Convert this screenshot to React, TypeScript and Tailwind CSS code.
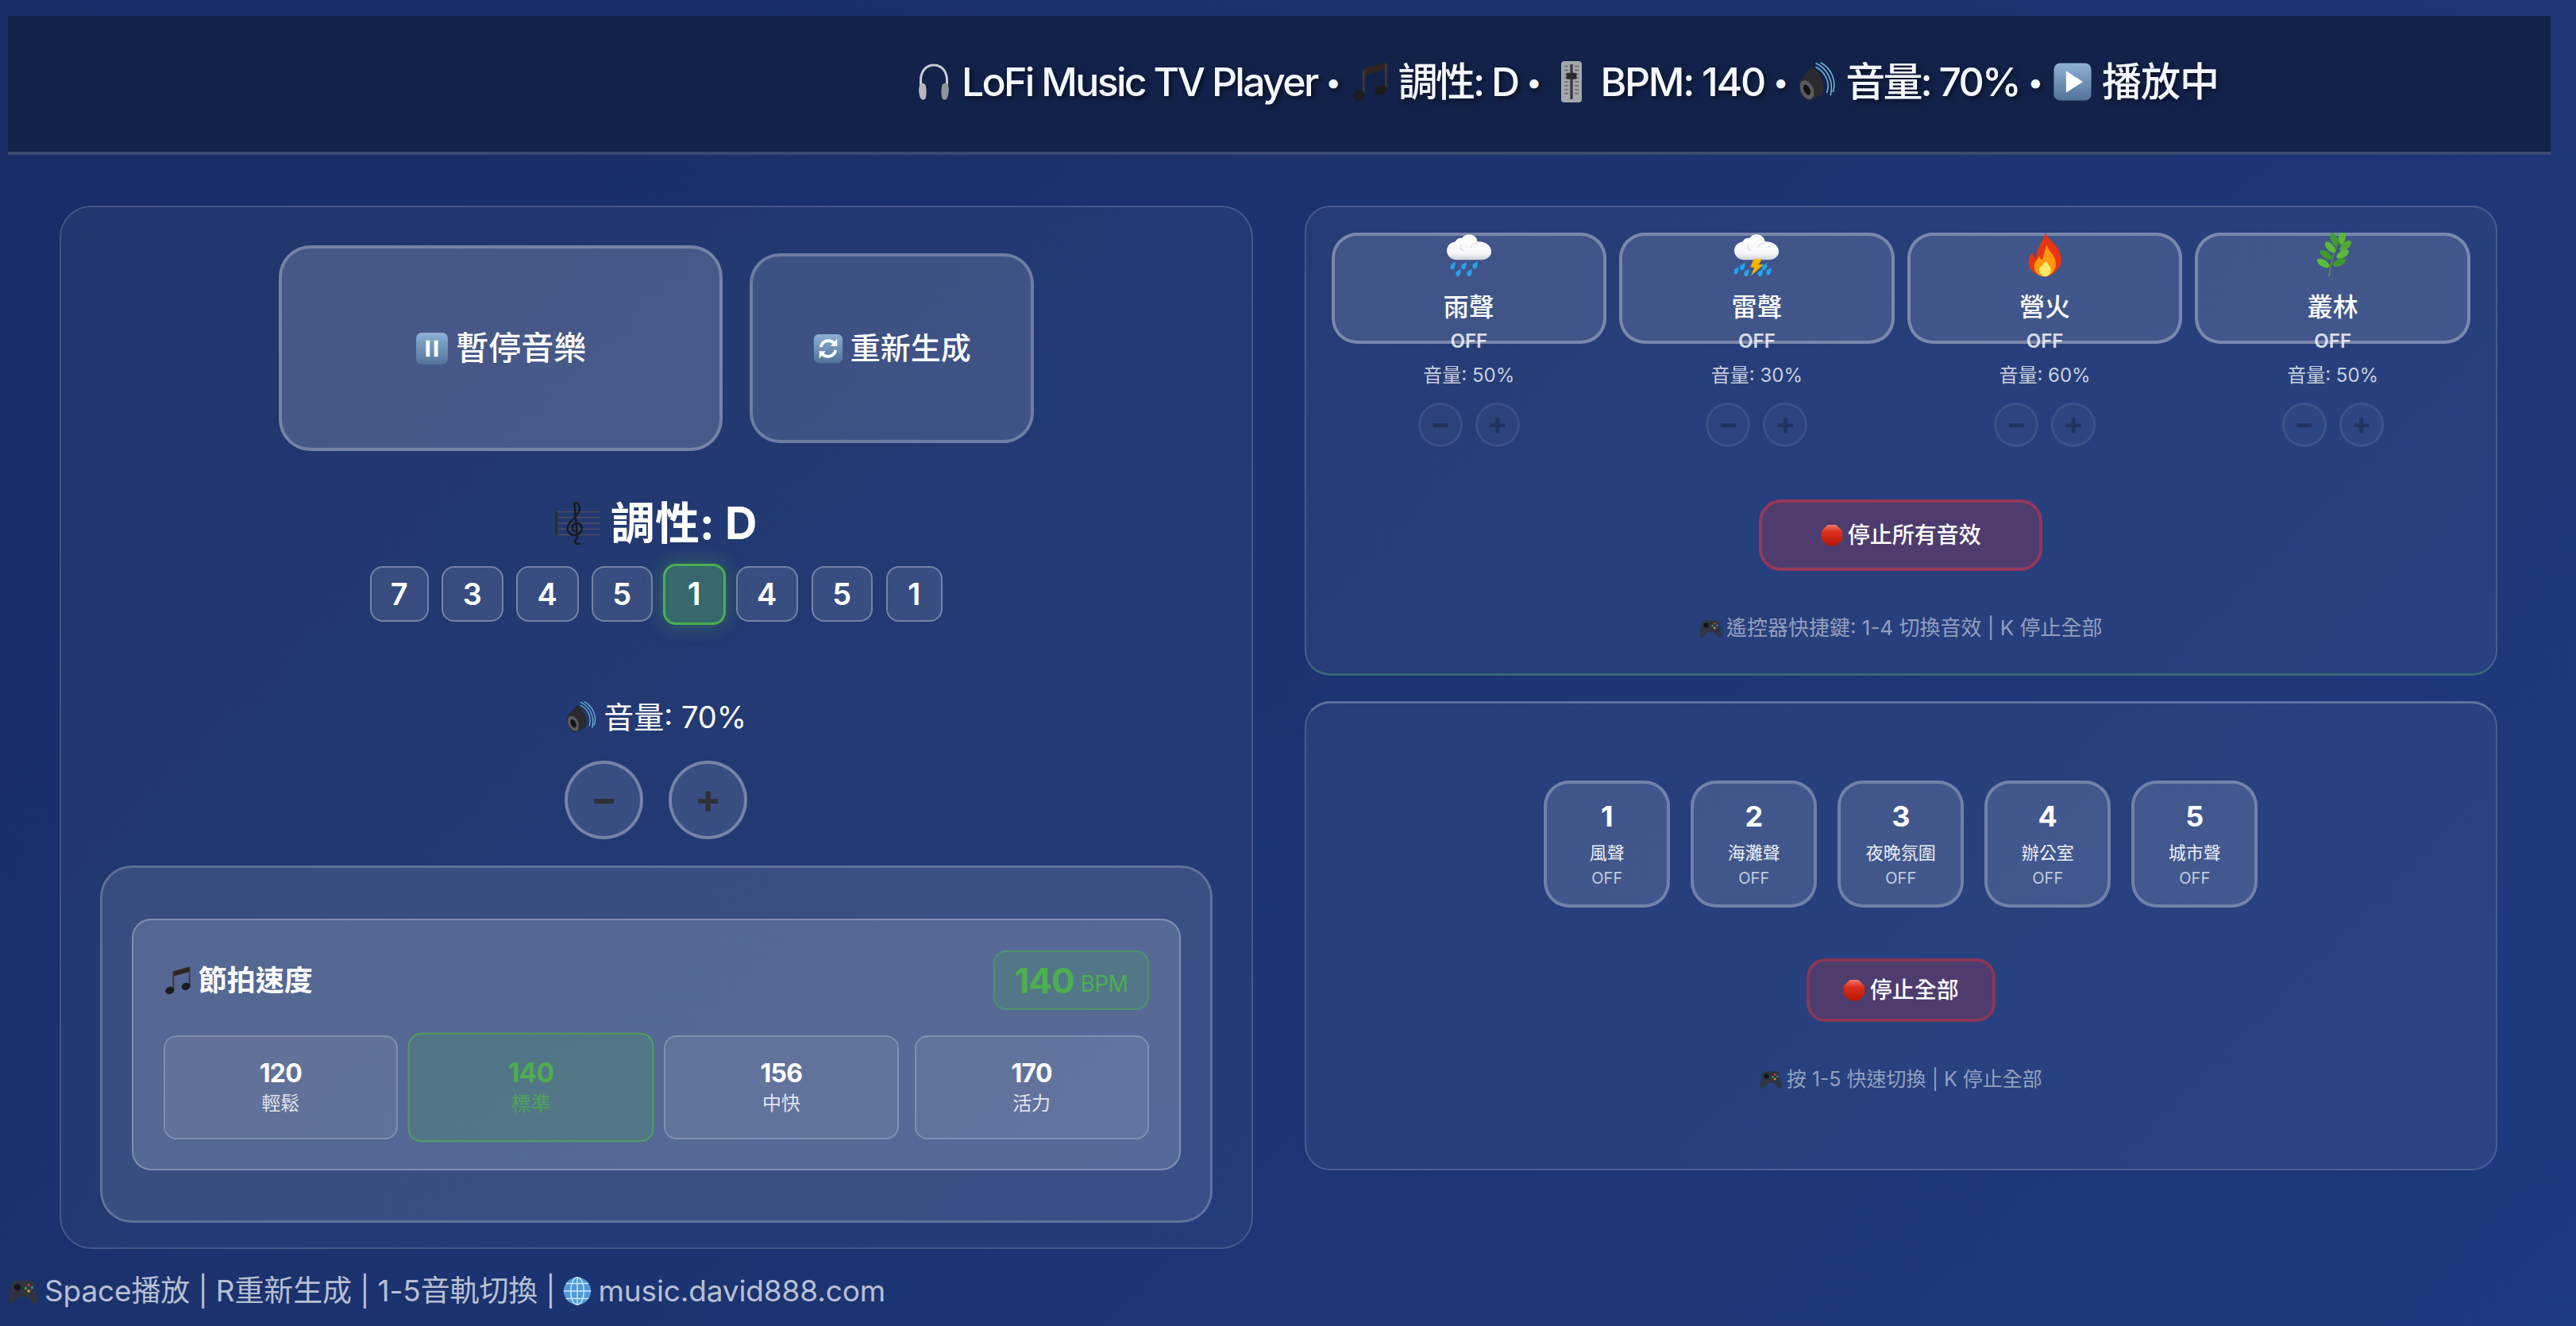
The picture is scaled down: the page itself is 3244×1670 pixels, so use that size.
import React from "react";

type S = { s: number; className?: string };
const Svg = ({ s, className, children }: S & { children: React.ReactNode }) => (
  <svg width={s} height={s} viewBox="0 0 64 64" className={`inline-block shrink-0 ${className ?? ""}`}>{children}</svg>
);

const Headphones = ({ s }: S) => (
  <Svg s={s}>
    <path d="M10 42V30C10 14 19 4 32 4s22 10 22 26v12" fill="none" stroke="#c9ccd2" strokeWidth="4" />
    <path d="M9 36c-3 4-3 16 1 24 2 3 6 3 8 0 2-7 2-15 0-23-2-3-7-4-9-1z" fill="#b4b7bd" />
    <path d="M55 36c3 4 3 16-1 24-2 3-6 3-8 0-2-7-2-15 0-23 2-3 7-4 9-1z" fill="#8f9298" />
  </Svg>
);
const Notes = ({ s }: S) => (
  <Svg s={s}>
    <path d="M22 11L58 1v11L22 22z" fill="#2e2523" />
    <path d="M22 13v40M58 3v40" stroke="#3f3836" strokeWidth="3.5" />
    <ellipse cx="14" cy="54" rx="10" ry="8" fill="#1c1c1f" transform="rotate(-20 14 54)" />
    <ellipse cx="50" cy="45" rx="10" ry="8" fill="#1c1c1f" transform="rotate(-20 50 45)" />
  </Svg>
);
const Slider = ({ s }: S) => (
  <Svg s={s}>
    <rect x="16" y="0" width="32" height="64" rx="5" fill="#a3a7ad" />
    <rect x="30" y="5" width="4" height="54" fill="#33363b" />
    <path d="M21 8h6M21 14h6M21 20h6M21 26h6M21 32h6M21 38h6M21 44h6M21 50h6M37 8h6M37 14h6M37 20h6M37 26h6M37 32h6M37 38h6M37 44h6M37 50h6" stroke="#6c7076" strokeWidth="2" />
    <rect x="24" y="18" width="16" height="10" rx="2" fill="#2a2c30" />
  </Svg>
);
const Speaker = ({ s }: S) => (
  <Svg s={s}>
    <path d="M30 2c18 8 30 28 24 52M38 1c18 10 26 30 20 48M30 8c16 8 24 26 18 42" fill="none" stroke="#6fb7d8" strokeWidth="2" />
    <path d="M4 30L24 8c13 7 22 28 17 44L18 63C7 58 2 43 4 30z" fill="#2b2b2f" />
    <ellipse cx="16" cy="45" rx="10" ry="16" fill="#5b5c63" transform="rotate(-25 16 45)" />
    <ellipse cx="16" cy="45" rx="5" ry="9" fill="#141417" transform="rotate(-25 16 45)" />
  </Svg>
);
const KeyTile = ({ s, children }: S & { children: React.ReactNode }) => (
  <Svg s={s}>
    <defs>
      <linearGradient id="tile" x1="0" y1="0" x2="0" y2="1">
        <stop offset="0" stopColor="#8db2d6" />
        <stop offset="1" stopColor="#517399" />
      </linearGradient>
    </defs>
    <rect x="3" y="3" width="58" height="58" rx="10" fill="url(#tile)" />
    {children}
  </Svg>
);
const Play = ({ s }: S) => <KeyTile s={s}><path d="M22 15l26 17-26 17z" fill="#fff" /></KeyTile>;
const Pause = ({ s }: S) => <KeyTile s={s}><path d="M21 17h7v30h-7zM36 17h7v30h-7z" fill="#fff" /></KeyTile>;
const Refresh = ({ s }: S) => (
  <KeyTile s={s}>
    <path d="M17 29a16 16 0 0 1 28-7M47 35a16 16 0 0 1-28 7" fill="none" stroke="#fff" strokeWidth="6" />
    <path d="M50 12v15H37zM14 52V37h13z" fill="#fff" />
  </KeyTile>
);
const Score = ({ s }: S) => (
  <Svg s={s}>
    <path d="M2 16h60M2 24h60M2 32h60M2 40h60M2 48h60" stroke="#4a4d58" strokeWidth="1.5" />
    <path d="M2 16v32" stroke="#2a2a2e" strokeWidth="3" />
    <path d="M35 60c-6 3-10-3-5-6M31 54L27 4c6-3 9 8 5 14L19 33c-5 8 1 18 12 15 10-4 7-18-2-16-7 2-6 10-1 11" fill="none" stroke="#1a1a1e" strokeWidth="2.6" />
  </Svg>
);
const Cloud = () => (
  <g>
    <defs>
      <linearGradient id="cloudg" x1="0" y1="0" x2="0" y2="1">
        <stop offset="0" stopColor="#ffffff" />
        <stop offset="0.75" stopColor="#f6f7f9" />
        <stop offset="1" stopColor="#cfd3da" />
      </linearGradient>
    </defs>
    <path d="M14 39C6 39 0 33 0 26c0-7 5-12 12-13 2-4 6-6 10-5 3-6 14-8 20-1 1 2 2 4 2 6 10-1 20 5 20 14 0 7-6 12-14 12z" fill="url(#cloudg)" />
    <path d="M24 26c-4-1-6-6-3-9M44 15c-5 0-9 3-10 7" fill="none" stroke="#d7dbe1" strokeWidth="1.5" />
  </g>
);
const Drop = ({ x, y }: { x: number; y: number }) => (
  <path d={`M${x + 5} ${y - 6}c1 5-1 11-4 11s-4-4-2-7z`} fill="#26a2ee" />
);
const Rain = ({ s }: S) => (
  <Svg s={s}>
    <Cloud />
    {[[7, 48], [23, 48], [39, 47], [15, 58], [31, 58]].map(([x, y]) => (
      <Drop key={`${x}-${y}`} x={x} y={y} />
    ))}
  </Svg>
);
const Storm = ({ s }: S) => (
  <Svg s={s}>
    <Cloud />
    {[[1, 55], [10, 49], [16, 58], [42, 49], [48, 56], [36, 58]].map(([x, y]) => (
      <Drop key={`${x}-${y}`} x={x} y={y} />
    ))}
    <path d="M28 38h12l-5 8h7L24 62l5-12h-6z" fill="#f7b500" />
  </Svg>
);
const Fire = ({ s }: S) => (
  <Svg s={s}>
    <g transform="translate(-6 0) scale(1.2 1)">
      <path d="M33 0c3 12 16 18 18 34 1 6 1 13-5 20-4 6-9 9-14 9-9 0-17-6-19-15-2-8 0-15 4-20 0 5 2 8 4 9 0-12 8-23 12-37z" fill="#e8350f" />
      <path d="M34 18c2 9 11 15 11 27 0 9-6 18-13 18-8 0-13-7-13-14 0-7 4-10 6-15 1 3 2 5 4 5 1-7 3-14 5-21z" fill="#ff9a0f" />
      <path d="M33 40c1 5 6 8 6 13 0 5-3 10-7 10s-7-5-7-9c0-6 6-8 8-14z" fill="#ffe96a" />
    </g>
  </Svg>
);
const Herb = ({ s }: S) => {
  const leaves: [number, number, number, string][] = [
    [45, 7, 10, "#5cb83a"], [34, 10, -25, "#3f9a2f"], [50, 19, 50, "#4faa34"], [28, 21, -45, "#5cb83a"],
    [46, 31, 60, "#5cb83a"], [22, 32, -55, "#3f9a2f"], [41, 43, 65, "#3f9a2f"], [18, 44, -60, "#5cb83a"],
  ];
  return (
    <Svg s={s}>
      <path d="M26 63C29 44 34 24 43 4" stroke="#5d8a3c" strokeWidth="2" fill="none" />
      {leaves.map(([x, y, r, c]) => (
        <ellipse key={`${x}-${y}`} cx={x} cy={y} rx="5" ry="10" fill={c} transform={`rotate(${r} ${x} ${y})`} />
      ))}
    </Svg>
  );
};
const Stop = ({ s }: S) => (
  <Svg s={s}>
    <defs>
      <linearGradient id="stopg" x1="0" y1="0" x2="0" y2="1">
        <stop offset="0" stopColor="#f0776a" />
        <stop offset="0.35" stopColor="#d9301c" />
        <stop offset="1" stopColor="#b81500" />
      </linearGradient>
    </defs>
    <path d="M20 2h24l18 18v24L44 62H20L2 44V20z" fill="url(#stopg)" />
  </Svg>
);
const Pad = ({ s }: S) => (
  <Svg s={s}>
    <path d="M16 10h32c6 0 9 5 10 12l5 28c1 8-7 12-12 6L41 44H23L13 56c-5 6-13 2-12-6l5-28c1-7 4-12 10-12z" fill="#2f3540" />
    <circle cx="20" cy="24" r="7" fill="#12151b" />
    <circle cx="44" cy="19" r="3" fill="#c93a3a" />
    <circle cx="51" cy="25" r="3" fill="#3a7ac9" />
    <circle cx="38" cy="26" r="3" fill="#4a9a4a" />
    <circle cx="44" cy="32" r="3" fill="#d0a93a" />
  </Svg>
);
const Globe = ({ s }: S) => (
  <Svg s={s}>
    <circle cx="32" cy="32" r="29" fill="#4f9ad6" />
    <path d="M32 3v58M3 32h58M8 16h48M8 48h48" stroke="#cde6f7" strokeWidth="2.5" />
    <ellipse cx="32" cy="32" rx="14" ry="29" fill="none" stroke="#cde6f7" strokeWidth="2.5" />
  </Svg>
);

const sounds = [
  { name: "雨聲", vol: "音量: 50%", Icon: Rain },
  { name: "雷聲", vol: "音量: 30%", Icon: Storm },
  { name: "營火", vol: "音量: 60%", Icon: Fire },
  { name: "叢林", vol: "音量: 50%", Icon: Herb },
];
const tracks = [
  { n: "1", name: "風聲" },
  { n: "2", name: "海灘聲" },
  { n: "3", name: "夜晚氛圍" },
  { n: "4", name: "辦公室" },
  { n: "5", name: "城市聲" },
];
const chords = [
  { t: "7", w: "w-[74px]" },
  { t: "3", w: "w-[78px]" },
  { t: "4", w: "w-[79px]" },
  { t: "5", w: "w-[77px]" },
  { t: "1", w: "w-[79px] -mx-[3px]", active: true },
  { t: "4", w: "w-[78px]" },
  { t: "5", w: "w-[77px] ml-px" },
  { t: "1", w: "w-[71px] ml-px" },
];
const tempos = [
  { n: "120", l: "輕鬆" },
  { n: "140", l: "標準", active: true },
  { n: "156", l: "中快" },
  { n: "170", l: "活力" },
];

const Dot = () => <span className="text-[36px] tracking-normal">•</span>;

export default function App() {
  return (
    <div className="w-[3244px] h-[1670px] overflow-hidden flex flex-col pt-5 text-white bg-[linear-gradient(135deg,#182c66_0%,#1b3370_45%,#1e3a80_100%)] font-['Inter','Noto_Sans_CJK_TC',sans-serif]">
      <header className="ml-[10px] w-[3202px] h-[175px] shrink-0 flex items-center pl-[1142px] pb-[6px] bg-[#13224a] border-b-4 border-[#3b4a70] text-[50px] leading-[60px] font-medium whitespace-nowrap text-[#f4f8ff] [text-shadow:3px_3px_6px_rgba(0,0,0,0.55)]">
        <span className="flex items-center gap-[11px]">
          <Headphones s={48} />
          <span className="tracking-[-2.7px]">LoFi Music TV Player</span>
          <Dot />
          <Notes s={50} />
          <span className="tracking-[-2.8px]">調性: D</span>
          <Dot />
          <Slider s={52} />
          <span className="tracking-[-2.3px]">BPM: 140</span>
          <Dot />
          <Speaker s={50} />
          <span className="tracking-[-2.8px]">音量: 70%</span>
          <Dot />
          <Play s={52} />
          <span className="tracking-[-1px]">播放中</span>
        </span>
      </header>

      <main className="ml-[75px] mt-16 w-[3070px] grid grid-cols-2 gap-x-[65px] items-start">
        <section className="h-[1314px] border-2 border-white/15 rounded-[40px] bg-white/[0.04] px-12 pt-12 flex flex-col items-center">
          <div className="flex items-center gap-[34px] h-[259px]">
            <button className="w-[559px] h-[259px] rounded-[40px] border-4 border-white/25 bg-white/[0.17] text-[41px] font-medium flex items-center justify-center gap-[8px]">
              <Pause s={44} />
              <span>暫停音樂</span>
            </button>
            <button className="w-[358px] h-[239px] rounded-[38px] border-4 border-white/25 bg-white/[0.13] text-[38px] font-medium flex items-center justify-center gap-[8px]">
              <Refresh s={40} />
              <span>重新生成</span>
            </button>
          </div>

          <h2 className="mt-[57px] text-[56px] leading-[68px] font-bold flex items-center gap-[12px]">
            <Score s={58} />
            <span>調性: D</span>
          </h2>

          <div className="mt-5 flex items-center gap-4 h-[70px]">
            {chords.map((c, i) =>
              c.active ? (
                <div key={i} className={`${c.w} h-[77px] rounded-[16px] border-[3px] border-[#4caf50] bg-[#36686e] shadow-[0_0_24px_rgba(76,175,80,0.45)] flex items-center justify-center text-[40px] font-semibold`}>
                  {c.t}
                </div>
              ) : (
                <div key={i} className={`${c.w} h-[70px] rounded-[16px] border-2 border-white/30 bg-white/10 flex items-center justify-center text-[38px] font-semibold`}>
                  {c.t}
                </div>
              )
            )}
          </div>

          <div className="mt-[98px] text-[38px] leading-[44px] flex items-center gap-[8px]">
            <Speaker s={40} />
            <span>音量: 70%</span>
          </div>

          <div className="mt-[33px] flex gap-8">
            {["−", "+"].map((g) => (
              <button key={g} className="w-[99px] h-[99px] rounded-full border-4 border-white/30 bg-white/10 text-[#2f3138] text-[50px] leading-none font-bold flex items-center justify-center pb-1">
                {g}
              </button>
            ))}
          </div>

          <div className="mt-[33px] w-[1401px] h-[450px] rounded-[40px] border-[3px] border-white/20 bg-white/10 px-[37px] pt-16">
            <div className="h-[317px] rounded-[24px] border-2 border-white/25 bg-white/15 px-[38px] pt-[38px]">
              <div className="flex items-center justify-between h-[75px]">
                <div className="flex items-center gap-[8px] text-[36px] font-bold">
                  <Notes s={36} />
                  <span>節拍速度</span>
                </div>
                <div className="w-[196px] h-[75px] rounded-[16px] border-2 border-[#4caf50]/50 bg-[#4caf50]/20 flex items-center justify-center gap-[8px] text-[#4caf50]">
                  <span className="text-[44px] font-bold tracking-tight">140</span>
                  <span className="text-[28px] pt-2 tracking-tight">BPM</span>
                </div>
              </div>
              <div className="mt-8 grid grid-cols-4 gap-5 items-center">
                {tempos.map((t) => (
                  <div
                    key={t.n}
                    className={
                      t.active
                        ? "h-[131px] scale-105 rounded-[16px] border-2 border-[#4caf50]/70 bg-[#4caf50]/20 text-[#4caf50] flex flex-col items-center justify-center pb-1"
                        : "h-[131px] rounded-[16px] border-2 border-white/20 bg-white/[0.07] flex flex-col items-center justify-center pb-1"
                    }
                  >
                    <span className="text-[32px] leading-[44px] font-bold tracking-tight">{t.n}</span>
                    <span className="text-[24px] leading-[32px] opacity-80">{t.l}</span>
                  </div>
                ))}
              </div>
            </div>
          </div>
        </section>

        <div className="flex flex-col gap-8">
          <section className="h-[592px] border-2 border-b-[3px] border-white/15 border-b-[#3a6678] rounded-[32px] bg-white/[0.05] px-8 pt-8 flex flex-col items-center">
            <div className="w-full grid grid-cols-4 gap-4">
              {sounds.map((s) => (
                <div key={s.name} className="flex flex-col items-center">
                  <div className="w-full h-[140px] rounded-[32px] border-4 border-white/30 bg-white/[0.12] flex flex-col items-center">
                    <div className="-mt-1 h-14"><s.Icon s={56} /></div>
                    <span className="mt-[18px] text-[32px] leading-[40px] font-medium">{s.name}</span>
                    <span className="mt-2 text-[24px] leading-[30px] font-semibold text-white/80">OFF</span>
                  </div>
                  <span className="mt-6 text-[24px] leading-[32px] text-white/75">{s.vol}</span>
                  <div className="mt-[18px] flex gap-4 opacity-30">
                    {["−", "+"].map((g) => (
                      <button key={g} className="w-14 h-14 rounded-full border-[3px] border-white/25 bg-white/10 text-[#14182a] text-[38px] leading-none font-bold flex items-center justify-center pb-1">
                        {g}
                      </button>
                    ))}
                  </div>
                </div>
              ))}
            </div>
            <button className="mt-[66px] w-[357px] h-[90px] rounded-[28px] border-4 border-[#96375a] bg-[#4e3c6e] text-[28px] font-medium flex items-center justify-center gap-[6px]">
              <Stop s={28} />
              <span>停止所有音效</span>
            </button>
            <div className="mt-[54px] text-[26px] leading-[36px] text-white/50 flex items-center gap-[6px]">
              <Pad s={28} />
              <span>遙控器快捷鍵: 1-4 切換音效 | K 停止全部</span>
            </div>
          </section>

          <section className="h-[591px] border-2 border-t-[3px] border-white/15 border-t-white/25 rounded-[32px] bg-white/[0.05] pt-[97px] flex flex-col items-center">
            <div className="flex gap-[26px]">
              {tracks.map((t) => (
                <div key={t.n} className="w-[159px] h-[160px] rounded-[32px] border-4 border-white/25 bg-white/[0.12] flex flex-col items-center pt-[18px]">
                  <span className="text-[36px] leading-[46px] font-bold">{t.n}</span>
                  <span className="mt-[7px] text-[22px] leading-[32px] text-white/90">{t.name}</span>
                  <span className="mt-px text-[20px] leading-[30px] text-white/70">OFF</span>
                </div>
              ))}
            </div>
            <button className="mt-16 w-[238px] h-[80px] rounded-[24px] border-4 border-[#8a3658] bg-[#4e3c6e] text-[28px] font-medium flex items-center justify-center gap-[6px]">
              <Stop s={28} />
              <span>停止全部</span>
            </button>
            <div className="mt-[54px] text-[25px] leading-[36px] text-white/50 flex items-center gap-[6px]">
              <Pad s={28} />
              <span>按 1-5 快速切換 | K 停止全部</span>
            </div>
          </section>
        </div>
      </main>

      <footer className="mt-[29px] ml-[10px] h-12 flex items-center gap-[8px] text-[37px] leading-[48px] text-white/70 whitespace-nowrap tracking-[-0.15px]">
        <Pad s={38} />
        <span>Space播放 | R重新生成 | 1-5音軌切換 |</span>
        <Globe s={38} />
        <span>music.david888.com</span>
      </footer>
    </div>
  );
}
